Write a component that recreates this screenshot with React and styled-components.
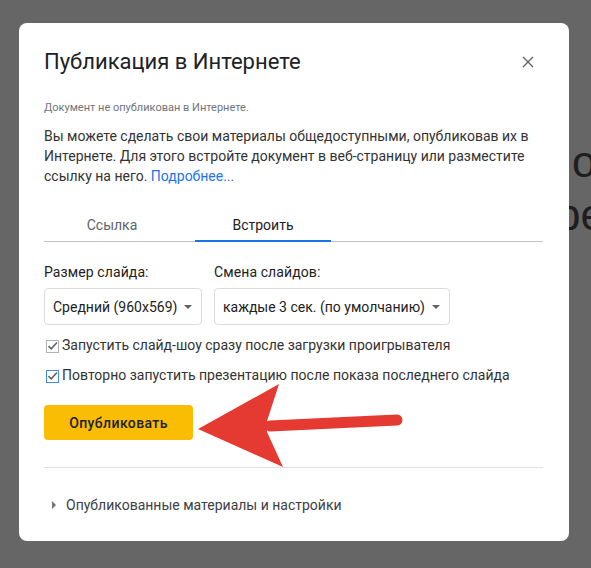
import React from "react";
import styled, { createGlobalStyle } from "styled-components";

const Global = createGlobalStyle`
  html, body { margin: 0; padding: 0; }
  body {
    width: 591px;
    height: 568px;
    overflow: hidden;
    background: #666666;
    font-family: Roboto, "Noto Sans", Arial, sans-serif;
  }
`;

const Page = styled.div`
  position: relative;
  width: 591px;
  height: 568px;
  overflow: hidden;
  background: #666666;
`;

const BehindText = styled.div`
  display: flex;
  flex-direction: column;
  padding-top: 135px;
  font-family: "Liberation Sans", Arial, sans-serif;
  font-size: 44px;
  line-height: 53px;
  color: #1e1e1e;
  white-space: nowrap;
`;

const BehindLine = styled.span`
  padding-left: ${({ x }) => x}px;
`;

const Dialog = styled.section`
  position: absolute;
  left: 19px;
  top: 23px;
  width: 550px;
  height: 518px;
  box-sizing: border-box;
  padding: 25px 26px 0 25px;
  background: #fff;
  border-radius: 8px;
  color: #3c4043;
`;

const Header = styled.div`
  display: flex;
  align-items: center;
  justify-content: space-between;
  height: 28px;
`;

const Title = styled.h1`
  margin: 0;
  font-size: 22px;
  line-height: 28px;
  font-weight: 400;
  color: #202124;
`;

const Close = styled.button`
  display: flex;
  border: 0;
  background: none;
  padding: 0;
  margin-right: 9px;
  cursor: pointer;
`;

const Status = styled.p`
  margin: 24px 0 0;
  font-size: 11px;
  line-height: 16px;
  color: #70757a;
`;

const Description = styled.p`
  margin: 10px 0 0;
  font-size: 14px;
  line-height: 20px;
  color: #333;
`;

const Link = styled.a`
  color: #1a73e8;
  text-decoration: none;
`;

const Tabs = styled.div`
  display: flex;
  gap: 15px;
  margin-top: 22px;
  border-bottom: 1px solid #c4c4c4;
`;

const Tab = styled.div`
  position: relative;
  display: flex;
  align-items: center;
  justify-content: center;
  width: 136px;
  height: 33px;
  font-size: 14px;
  color: ${({ active }) => (active ? "#202124" : "#5f6368")};

  &::after {
    content: "";
    position: absolute;
    left: 0;
    right: 0;
    bottom: -1px;
    height: 2px;
    background: ${({ active }) => (active ? "#1a73e8" : "transparent")};
  }
`;

const Fields = styled.div`
  display: flex;
  gap: 12px;
  margin-top: 21px;
`;

const Field = styled.div`
  display: flex;
  flex-direction: column;
  gap: 7px;
`;

const Label = styled.label`
  font-size: 14px;
  line-height: 18px;
  color: #222;
  letter-spacing: 0.1px;
`;

const Select = styled.div`
  display: flex;
  align-items: center;
  gap: 7px;
  box-sizing: border-box;
  width: ${({ w }) => w}px;
  height: 37px;
  padding: 0 8px 0 8px;
  border: 1px solid #dadce0;
  border-radius: 4px;
  font-size: 14px;
  color: #222;
  white-space: nowrap;
`;

const Caret = styled.span`
  width: 0;
  height: 0;
  border-left: 4px solid transparent;
  border-right: 4px solid transparent;
  border-top: 4px solid #5f6368;
`;

const Options = styled.div`
  display: flex;
  flex-direction: column;
  gap: 10px;
  margin-top: 10px;
`;

const CheckRow = styled.label`
  display: flex;
  align-items: center;
  gap: 3px;
  height: 20px;
  font-size: 14px;
  color: #333;
  white-space: nowrap;
`;

const Box = styled.span`
  display: flex;
  align-items: center;
  justify-content: center;
  box-sizing: border-box;
  width: 13px;
  height: 13px;
  margin-left: 2px;
  margin-top: 2px;
  border: 1px solid ${({ focus }) => (focus ? "#4285f4" : "#b0b0b0")};
`;

const PublishButton = styled.button`
  display: block;
  margin-top: 20px;
  width: 149px;
  height: 35px;
  border: 0;
  border-radius: 4px;
  background: #fbbc04;
  font-family: Roboto, Arial, sans-serif;
  font-size: 14px;
  font-weight: 500;
  color: #202124;
  letter-spacing: 0.4px;
`;

const Divider = styled.hr`
  margin: 27px 0 0;
  border: 0;
  border-top: 1px solid #e0e0e0;
`;

const Expander = styled.div`
  display: flex;
  align-items: center;
  gap: 10px;
  margin-top: 27px;
  padding-left: 8px;
  height: 20px;
  font-size: 14px;
  color: #3c4043;
`;

const Tri = styled.span`
  width: 0;
  height: 0;
  border-top: 4px solid transparent;
  border-bottom: 4px solid transparent;
  border-left: 4px solid #757575;
`;

const Arrow = styled.svg`
  position: absolute;
  left: 190px;
  top: 375px;
  pointer-events: none;
`;

function Check() {
  return (
    <svg width="11" height="10" viewBox="0 0 11 10">
      <path d="M1.5 5.2 L4.2 7.8 L10 1.5" fill="none" stroke="#5f6368" strokeWidth="1.6" />
    </svg>
  );
}

export default function App() {
  return (
    <>
      <Global />
      <Page>
        <BehindText>
          <BehindLine x={572}>о</BehindLine>
          <BehindLine x={556}>ре</BehindLine>
        </BehindText>
        <Dialog>
          <Header>
            <Title>Публикация в Интернете</Title>
            <Close aria-label="Закрыть">
              <svg width="12" height="12" viewBox="0 0 12 12">
                <path d="M1 1 L11 11 M11 1 L1 11" stroke="#5f6368" strokeWidth="1.4" />
              </svg>
            </Close>
          </Header>
          <Status>Документ не опубликован в Интернете.</Status>
          <Description>
            Вы можете сделать свои материалы общедоступными, опубликовав их в Интернете. Для этого
            встройте документ в веб-страницу или разместите ссылку на него.{" "}
            <Link href="#">Подробнее...</Link>
          </Description>
          <Tabs>
            <Tab>Ссылка</Tab>
            <Tab active>Встроить</Tab>
          </Tabs>
          <Fields>
            <Field>
              <Label>Размер слайда:</Label>
              <Select w={158}>
                Средний (960x569) <Caret />
              </Select>
            </Field>
            <Field>
              <Label>Смена слайдов:</Label>
              <Select w={236}>
                каждые 3 сек. (по умолчанию) <Caret />
              </Select>
            </Field>
          </Fields>
          <Options>
            <CheckRow>
              <Box><Check /></Box>
              Запустить слайд-шоу сразу после загрузки проигрывателя
            </CheckRow>
            <CheckRow>
              <Box focus><Check /></Box>
              Повторно запустить презентацию после показа последнего слайда
            </CheckRow>
          </Options>
          <PublishButton>Опубликовать</PublishButton>
          <Divider />
          <Expander>
            <Tri />
            Опубликованные материалы и настройки
          </Expander>
        </Dialog>
        <Arrow width="220" height="100" viewBox="0 0 220 100">
          <line x1="80" y1="51" x2="207" y2="45" stroke="#e53a32" strokeWidth="11" strokeLinecap="round" />
          <polygon points="8,54 89,9 77,46 77,57 93,92" fill="#e53a32" />
        </Arrow>
      </Page>
    </>
  );
}
